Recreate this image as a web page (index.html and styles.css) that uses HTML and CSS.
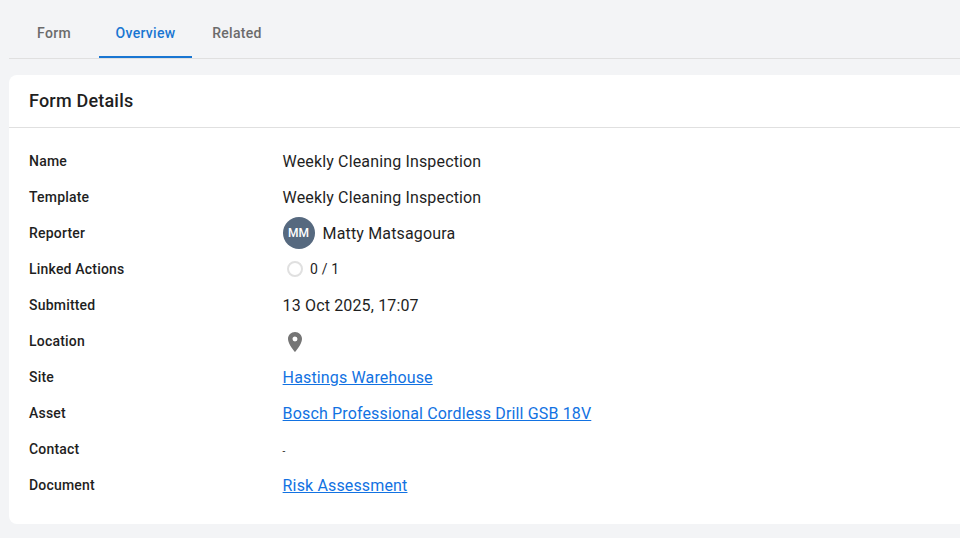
FILE: index.html
```html
<!DOCTYPE html>
<html lang="en">
<head>
  <meta charset="UTF-8">
  <meta name="viewport" content="width=device-width, initial-scale=1.0">
  <title>Form Details</title>
  <link rel="stylesheet" href="styles.css">
</head>
<body>
  <div class="tabs">
    <a class="tab" href="#">Form</a>
    <a class="tab active" href="#">Overview</a>
    <a class="tab" href="#">Related</a>
  </div>

  <div class="card">
    <h2 class="card-title">Form Details</h2>
    <div class="details">
      <div class="row">
        <div class="label">Name</div>
        <div class="value">Weekly Cleaning Inspection</div>
      </div>
      <div class="row">
        <div class="label">Template</div>
        <div class="value">Weekly Cleaning Inspection</div>
      </div>
      <div class="row">
        <div class="label">Reporter</div>
        <div class="value reporter">
          <span class="avatar">MM</span>
          <span>Matty Matsagoura</span>
        </div>
      </div>
      <div class="row">
        <div class="label">Linked Actions</div>
        <div class="value actions">
          <span class="progress"></span>
          <span>0 / 1</span>
        </div>
      </div>
      <div class="row">
        <div class="label">Submitted</div>
        <div class="value">13 Oct 2025, 17:07</div>
      </div>
      <div class="row">
        <div class="label">Location</div>
        <div class="value location">
          <svg width="24" height="24" viewBox="0 0 24 24"><path fill="#757575" d="M12 2C8.13 2 5 5.13 5 9c0 5.25 7 13 7 13s7-7.75 7-13c0-3.87-3.13-7-7-7zm0 9.5a2.5 2.5 0 0 1 0-5 2.5 2.5 0 0 1 0 5z"/></svg>
        </div>
      </div>
      <div class="row">
        <div class="label">Site</div>
        <div class="value"><a href="#">Hastings Warehouse</a></div>
      </div>
      <div class="row">
        <div class="label">Asset</div>
        <div class="value"><a href="#">Bosch Professional Cordless Drill GSB 18V</a></div>
      </div>
      <div class="row">
        <div class="label">Contact</div>
        <div class="value empty">-</div>
      </div>
      <div class="row">
        <div class="label">Document</div>
        <div class="value"><a href="#">Risk Assessment</a></div>
      </div>
    </div>
  </div>
</body>
</html>
```

FILE: styles.css
```css
:root {
  --bg-main: #f3f4f6;
  --border: #e0e0e0;
  --highlight: #1976d2;
  --link: #1272e2;
  --text-dark: #1f1f1f;
  --text-muted: #6b6b6b;
}
* { box-sizing: border-box; margin: 0; padding: 0; }
html, body { overflow: hidden; }
body {
  font-family: Roboto, "Liberation Sans", sans-serif;
  background: var(--bg-main);
  color: var(--text-dark);
  height: 538px;
  padding: 8px 0 0 9px;
}
.tabs {
  display: flex;
  height: 51px;
  border-bottom: 1px solid var(--border);
}
.tab {
  display: flex;
  align-items: center;
  justify-content: center;
  height: 50px;
  min-width: 90px;
  padding: 2px 16px 0;
  border-bottom: 2px solid transparent;
  font-size: 14px;
  font-weight: 500;
  letter-spacing: 0.3px;
  color: var(--text-muted);
  text-decoration: none;
}
.tab.active {
  min-width: 93px;
  color: var(--highlight);
  border-bottom-color: var(--highlight);
}
.card {
  margin-top: 16px;
  background: #fff;
  border-radius: 8px 0 0 8px;
  height: 449px;
}
.card-title {
  font-size: 18px;
  font-weight: 500;
  letter-spacing: 0.2px;
  line-height: 52px;
  height: 53px;
  padding-left: 20px;
  border-bottom: 1px solid var(--border);
}
.details {
  padding: 15px 20px 0;
}
.row {
  display: flex;
  align-items: center;
  height: 36px;
}
.label {
  width: 253.6px;
  font-size: 14px;
  font-weight: 500;
  letter-spacing: 0.2px;
}
.value {
  display: flex;
  align-items: center;
  font-size: 16px;
  letter-spacing: 0.15px;
}
.value a {
  color: var(--link);
}
.avatar {
  display: flex;
  align-items: center;
  justify-content: center;
  width: 32px;
  height: 32px;
  margin-right: 8px;
  border-radius: 50%;
  background: #56697f;
  color: #fff;
  font-size: 12px;
  font-weight: 500;
  letter-spacing: 0;
}
.actions {
  font-size: 14px;
  padding-left: 4px;
}
.progress {
  width: 16px;
  height: 16px;
  margin-right: 7.5px;
  border: 2px solid var(--border);
  border-radius: 50%;
}
.location svg {
  margin-top: 2px;
}
.empty {
  font-size: 10px;
  padding-top: 4px;
}
```
